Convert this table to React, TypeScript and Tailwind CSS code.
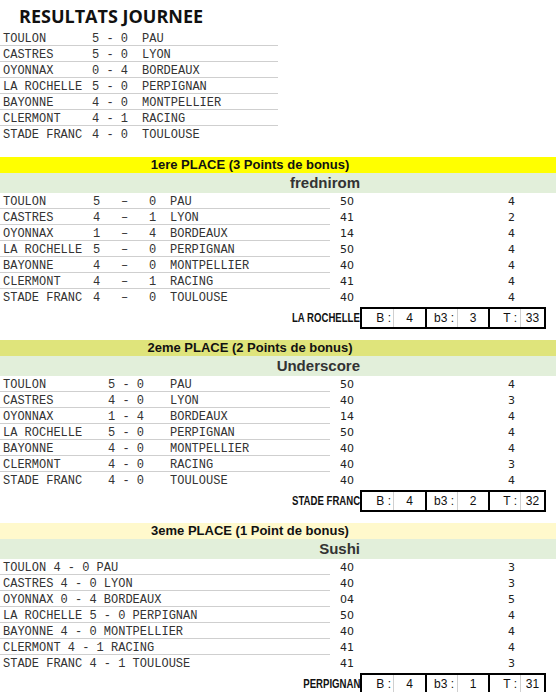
type Match = [string, string, string, string]

const results: Match[] = [
  ["TOULON", "5", "0", "PAU"],
  ["CASTRES", "5", "0", "LYON"],
  ["OYONNAX", "0", "4", "BORDEAUX"],
  ["LA ROCHELLE", "5", "0", "PERPIGNAN"],
  ["BAYONNE", "4", "0", "MONTPELLIER"],
  ["CLERMONT", "4", "1", "RACING"],
  ["STADE FRANC", "4", "0", "TOULOUSE"],
]

type Place = {
  title: string
  bg: string
  name: string
  variant: "cols" | "score" | "inline"
  rows: [Match, string, string][]
  pick: string
  b: string
  b3: string
  t: string
}

const places: Place[] = [
  {
    title: "1ere PLACE (3 Points de bonus)",
    bg: "bg-[#ffff00]",
    name: "frednirom",
    variant: "cols",
    rows: [
      [["TOULON", "5", "0", "PAU"], "50", "4"],
      [["CASTRES", "4", "1", "LYON"], "41", "2"],
      [["OYONNAX", "1", "4", "BORDEAUX"], "14", "4"],
      [["LA ROCHELLE", "5", "0", "PERPIGNAN"], "50", "4"],
      [["BAYONNE", "4", "0", "MONTPELLIER"], "40", "4"],
      [["CLERMONT", "4", "1", "RACING"], "41", "4"],
      [["STADE FRANC", "4", "0", "TOULOUSE"], "40", "4"],
    ],
    pick: "LA ROCHELLE",
    b: "4",
    b3: "3",
    t: "33",
  },
  {
    title: "2eme PLACE (2 Points de bonus)",
    bg: "bg-[#dfe47b]",
    name: "Underscore",
    variant: "score",
    rows: [
      [["TOULON", "5", "0", "PAU"], "50", "4"],
      [["CASTRES", "4", "0", "LYON"], "40", "3"],
      [["OYONNAX", "1", "4", "BORDEAUX"], "14", "4"],
      [["LA ROCHELLE", "5", "0", "PERPIGNAN"], "50", "4"],
      [["BAYONNE", "4", "0", "MONTPELLIER"], "40", "4"],
      [["CLERMONT", "4", "0", "RACING"], "40", "3"],
      [["STADE FRANC", "4", "0", "TOULOUSE"], "40", "4"],
    ],
    pick: "STADE FRANC",
    b: "4",
    b3: "2",
    t: "32",
  },
  {
    title: "3eme PLACE (1 Point de bonus)",
    bg: "bg-[#fff9cc]",
    name: "Sushi",
    variant: "inline",
    rows: [
      [["TOULON", "4", "0", "PAU"], "40", "3"],
      [["CASTRES", "4", "0", "LYON"], "40", "3"],
      [["OYONNAX", "0", "4", "BORDEAUX"], "04", "5"],
      [["LA ROCHELLE", "5", "0", "PERPIGNAN"], "50", "4"],
      [["BAYONNE", "4", "0", "MONTPELLIER"], "40", "4"],
      [["CLERMONT", "4", "1", "RACING"], "41", "4"],
      [["STADE FRANC", "4", "1", "TOULOUSE"], "41", "3"],
    ],
    pick: "PERPIGNAN",
    b: "4",
    b3: "1",
    t: "31",
  },
]

const mono = "font-['Liberation_Mono','Courier_New',monospace] text-[12px] text-[#333]"

const MatchText = ({ m, variant }: { m: Match; variant: Place["variant"] }) => {
  if (variant === "cols")
    return (
      <div className="flex whitespace-pre pl-[3px]">
        <span className="w-[90px]">{m[0]}</span>
        <span className="w-[28px]">{m[1]}</span>
        <span className="w-[28px]">–</span>
        <span className="w-[21px]">{m[2]}</span>
        <span>{m[3]}</span>
      </div>
    )
  if (variant === "score")
    return (
      <div className="flex whitespace-pre pl-[3px]">
        <span className="w-[105px]">{m[0]}</span>
        <span className="w-[62px]">{`${m[1]} - ${m[2]}`}</span>
        <span>{m[3]}</span>
      </div>
    )
  return <div className="whitespace-pre pl-[3px]">{`${m[0]} ${m[1]} - ${m[2]} ${m[3]}`}</div>
}

const Box = ({ label, value, lw, vw, pr, last }: { label: string; value: string; lw: string; vw: string; pr: string; last?: boolean }) => (
  <div className={`flex h-[22px] border-y-2 border-l-2 border-black ${last ? "border-r-2" : ""}`}>
    <div className={`${lw} ${pr} text-right leading-[18px]`}>{label}</div>
    <div className={`${vw} border-l border-[#d0d0d0] text-center leading-[18px]`}>{value}</div>
  </div>
)

const PlaceBlock = ({ p }: { p: Place }) => (
  <div className="mt-[11px]">
    <div className={`${p.bg} h-[16px]`}>
      <div className="w-[500px] text-center font-['Liberation_Sans',Arial,sans-serif] text-[13px] font-bold leading-[16px] text-[#111]">
        {p.title}
      </div>
    </div>
    <div className="h-[20px] bg-[#e2efda]">
      <div className="w-[360px] text-right font-['Liberation_Sans',Arial,sans-serif] text-[15px] font-bold leading-[20px] text-[#333]">
        {p.name}
      </div>
    </div>
    {p.rows.map(([m, pts, bon], i) => (
      <div key={i} className="flex h-[16px]">
        <div className={`w-[330px] pt-[2px] ${mono} leading-[14px] ${i < p.rows.length - 1 ? "border-b border-[#cfcfcf]" : ""}`}>
          <MatchText m={m} variant={p.variant} />
        </div>
        <div className="w-[178px] pl-[10px] pt-[1px] font-['DejaVu_Sans',Verdana,sans-serif] text-[11px] leading-[16px] text-[#222]">{pts}</div>
        <div className="pt-[1px] font-['DejaVu_Sans',Verdana,sans-serif] text-[11px] leading-[16px] text-[#222]">{bon}</div>
      </div>
    ))}
    <div className="mt-[2px] flex h-[22px] items-center">
      <div className="w-[360px] overflow-hidden whitespace-nowrap text-right font-['Liberation_Sans',Arial,sans-serif] text-[12px] font-bold text-[#111]">
        <span className="inline-block origin-right scale-x-[0.8]">{p.pick}</span>
      </div>
      <div className="flex font-['Liberation_Sans',Arial,sans-serif] text-[12px] text-[#111]">
        <Box label="B :" value={p.b} lw="w-[31px]" vw="w-[32px]" pr="pr-[2px]" />
        <Box label="b3 :" value={p.b3} lw="w-[30px]" vw="w-[31px]" pr="pr-[3px]" />
        <Box label="T :" value={p.t} lw="w-[30px]" vw="w-[24px]" pr="pr-[3px]" last />
      </div>
    </div>
  </div>
)

const App: React.FC = () => {
  return (
    <div className="w-[556px] h-[692px] overflow-hidden bg-white">
      <div className="h-[30px] pl-[19px] pt-[3px] font-['Open_Sans',sans-serif] text-[18px] font-bold leading-[27px] text-[#111]">
        RESULTATS JOURNEE
      </div>
      <div className={mono}>
        {results.map((m, i) => (
          <div
            key={i}
            className={`flex h-[16px] w-[278px] whitespace-pre pl-[3px] pt-[2px] leading-[14px] ${i < results.length - 1 ? "border-b border-[#cfcfcf]" : ""}`}
          >
            <span className="w-[89px]">{m[0]}</span>
            <span className="w-[50px]">{`${m[1]} - ${m[2]}`}</span>
            <span>{m[3]}</span>
          </div>
        ))}
      </div>
      <div className="pt-[4px]">
        {places.map((p, i) => (
          <PlaceBlock key={i} p={p} />
        ))}
      </div>
    </div>
  )
}

export default App
